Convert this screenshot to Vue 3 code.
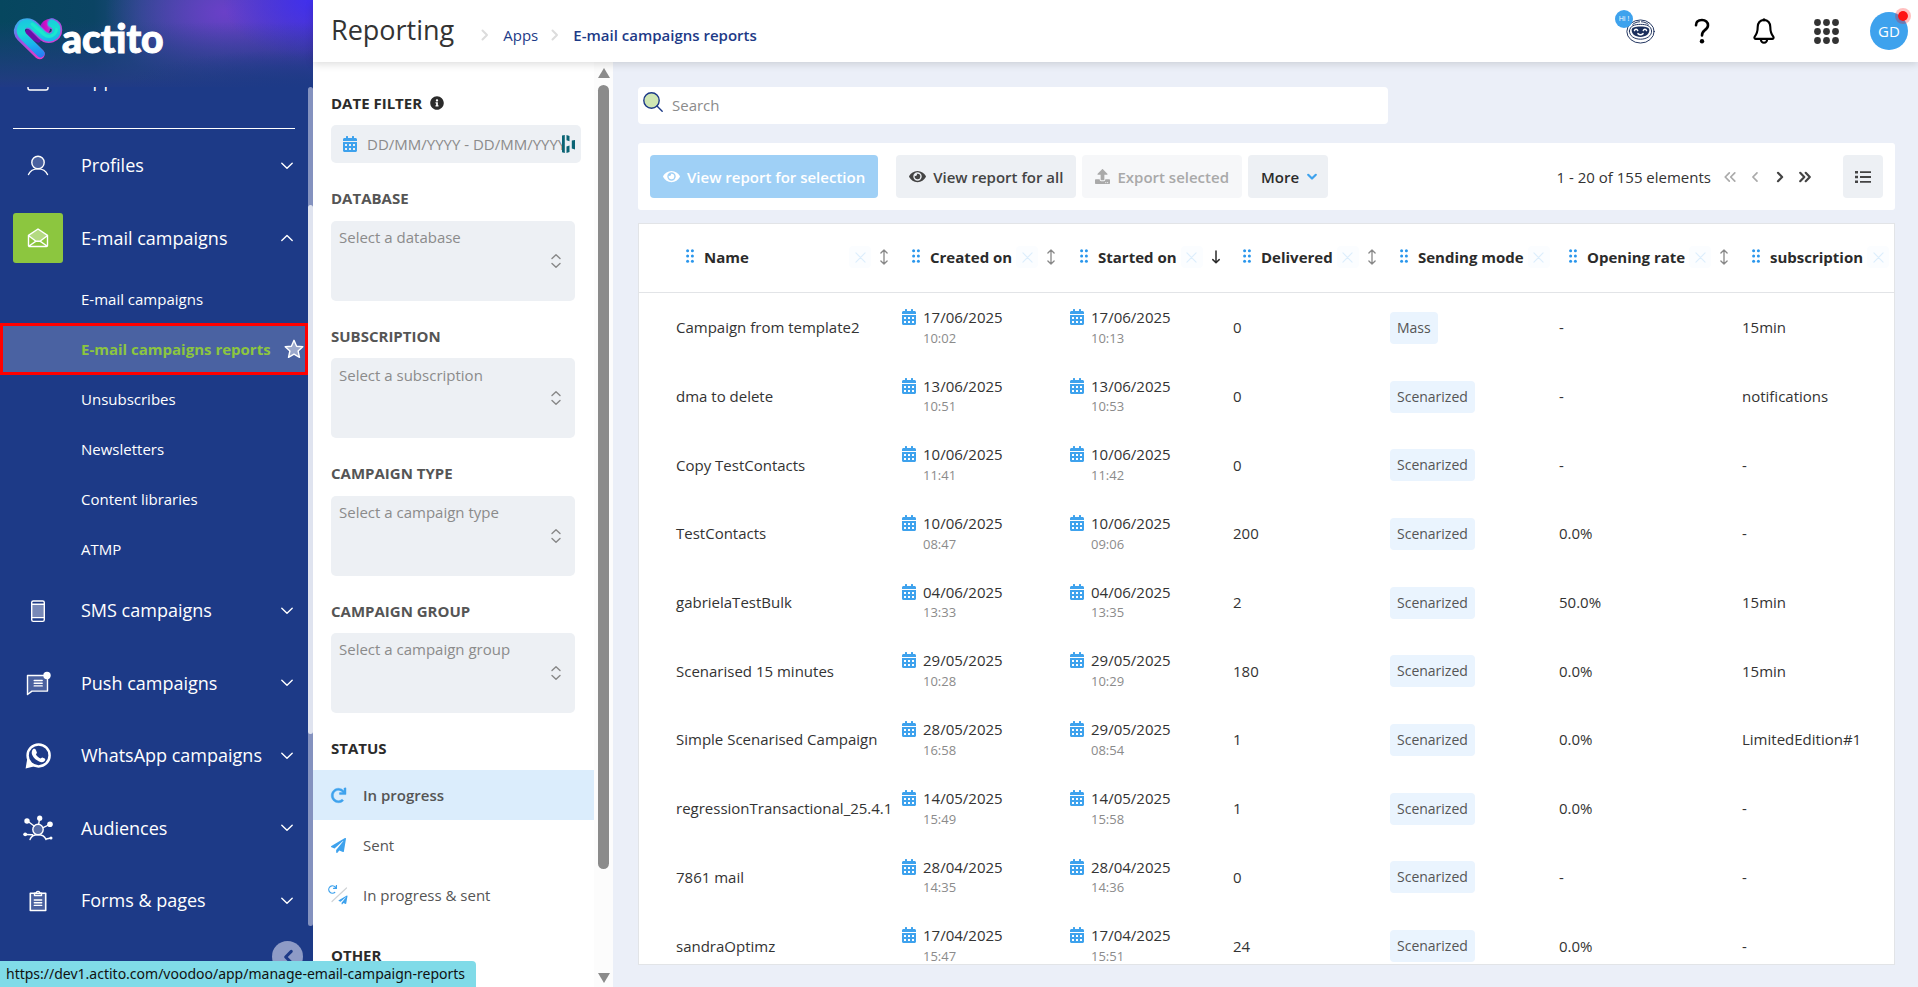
<script setup>
const icons = {
  user: ['0 0 24 24', '<circle cx="12" cy="8.5" r="6.2" fill="currentColor" fill-opacity=".2"/><path d="M2.5 20.5C4 17 7.500 14.900 12 14.900s8 2.100 9.500 5.600"/>'],
  envelope: ['0 0 24 24', '<path d="M2.500 9.500 12 3l9.500 6.500-7.500 6.200h-4z" fill="currentColor" fill-opacity=".35" stroke="none"/><path d="M2.500 9.300 12 3l9.500 6.300v10.200a1 1 0 0 1-1 1h-17a1 1 0 0 1-1-1zM2.700 9.800l7.300 5.400h4l7.300-5.400M3 20l7-4.800M21 20l-7-4.800"/>'],
  phone: ['0 0 24 24', '<rect x="5.700" y="2" width="12.600" height="20.400" rx="1.600"/><path d="M5.700 5.200h12.600M5.700 18.600h12.600"/><path d="M6 5.200h12v13.400H6z" fill="currentColor" fill-opacity=".4" stroke="none"/>'],
  push: ['0 0 26 26', '<path d="M2.500 5.500h20v15.600H7l-4.500 3.400z" fill="currentColor" fill-opacity=".2"/><path d="M9.200 10.500h8M9.200 13.200h8M9.200 15.900h8"/><circle cx="22" cy="5.500" r="3.700" fill="currentColor" stroke="none"/>'],
  whatsapp: ['0 0 26 26', '<circle cx="13.600" cy="12.400" r="11" stroke-width="2.500"/><path d="M2.200 16 .6 25.400l8.200-2z" fill="currentColor" stroke="none"/><path d="M8 6.300c1-.9 2.400-.5 3 .9l.9 2.200c.2.800-.8 1.400-1 1.900 1 2 2.600 3.500 4.600 4.300.6-.4 1.200-1.400 1.900-1.100l2.300 1.100c1 .6.6 2-.3 2.700-2.100 1.600-5.200.8-7.800-1.200-3.100-2.400-5.300-5.600-4.800-8.400.2-1 .6-1.900 1.200-2.400z" fill="currentColor" stroke="none"/>'],
  audience: ['0 0 30 26', '<circle cx="15" cy="14.500" r="5.200" fill="currentColor" fill-opacity=".25"/><path d="M7 24.500c1-3 4-4.800 8-4.800s7 1.800 8 4.800M4.500 6l6.600 5M16.500 4l-.8 5M26.500 9.500l-6.300 3.200M2.500 19.500l7 .3M23 24l5-1"/><g fill="currentColor" stroke="none"><circle cx="4" cy="6" r="2.700"/><circle cx="16.700" cy="3.200" r="2.600"/><circle cx="27" cy="9.200" r="2.800"/><circle cx="2.200" cy="19.300" r="1.900"/><circle cx="28" cy="23" r="1.500"/></g>'],
  forms: ['0 0 24 24', '<path d="M4.300 4.300h15.400v17.200H4.300z" fill="currentColor" fill-opacity=".2" stroke-width="1.600"/><path d="M8.500 6.500V4.300h1.700c0-2.600 3.600-2.600 3.600 0h1.700v2.200zM8.300 11h7.400M8.300 13.700h7.400M8.300 16.400h7.400"/>'],
  apps: ['0 0 24 24', '<rect x="2" y="2" width="20" height="20" rx="2"/>'],
  down: ['0 0 12 8', '<path d="M.8 1.200 6 6.300l5.200-5.100"/>'],
  up: ['0 0 12 8', '<path d="M.8 6.600 6 1.500l5.200 5.100"/>'],
  star: ['0 0 20 20', '<path d="m10 1.300 2.600 5.900 6.200.6-4.700 4.200 1.400 6.300-5.500-3.200-5.500 3.200 1.400-6.300-4.700-4.200 6.200-.6z" fill="currentColor" fill-opacity=".45"/>'],
  crumb: ['0 0 8 12', '<path d="m1.500 1.500 4.500 4.500-4.500 4.500" stroke-width="2"/>'],
  info: ['0 0 512 512', '<path fill="currentColor" stroke="none" d="M256 8C119 8 8 119 8 256s111 248 248 248 248-111 248-248S393 8 256 8zm0 110c23.200 0 42 18.800 42 42s-18.800 42-42 42-42-18.800-42-42 18.800-42 42-42zm56 254c0 6.600-5.400 12-12 12h-88c-6.600 0-12-5.400-12-12v-24c0-6.600 5.400-12 12-12h12v-64h-12c-6.600 0-12-5.400-12-12v-24c0-6.600 5.400-12 12-12h64c6.600 0 12 5.400 12 12v100h12c6.600 0 12 5.400 12 12z"/>'],
  calendar: ['0 0 448 512', '<path fill="currentColor" stroke="none" fill-rule="evenodd" d="M0 464c0 26.500 21.500 48 48 48h352c26.500 0 48-21.500 48-48V192H0zM320 256h64v64h-64zm0 128h64v64h-64zM192 256h64v64h-64zm0 128h64v64h-64zM64 256h64v64H64zm0 128h64v64H64zM400 64h-48V16c0-8.800-7.200-16-16-16h-32c-8.800 0-16 7.200-16 16v48H160V16c0-8.800-7.200-16-16-16h-32c-8.800 0-16 7.200-16 16v48H48C21.500 64 0 85.500 0 112v48h448v-48c0-26.500-21.500-48-48-48z"/>'],
  bars: ['0 0 14 18', '<path fill="#0b6474" stroke="none" d="M1 .5 3.800 0v18L1 17.300zM5.500 0l3 1v5.200l-3-1zM5.500 11.500l3-1V17l-3 1zM10.800 5.500 14 5v9.500l-3.200-1z"/>'],
  updown: ['0 0 10 16', '<path d="M1 5.500 5 1.700l4 3.800M1 10.500l4 3.800 4-3.800" stroke-width="1.400"/>'],
  redo: ['0 0 512 512', '<path fill="currentColor" stroke="currentColor" stroke-width="14" d="M500.300 0h-47.400a12 12 0 0 0-12 12.600l4 82.700A247.400 247.400 0 0 0 256 8C119.300 8 7.900 119.500 8 256.200 8.100 393.100 119.100 504 256 504a247.100 247.100 0 0 0 166.200-63.900 12 12 0 0 0 .5-17.400l-34-34a12 12 0 0 0-16.400-.6A176 176 0 1 1 402.100 157.800l-101.500-4.900a12 12 0 0 0-12.600 12v47.400a12 12 0 0 0 12 12h200.300a12 12 0 0 0 12-12V12a12 12 0 0 0-12-12z"/>'],
  plane: ['0 0 512 512', '<path fill="currentColor" stroke="none" d="M476 3.200 12.500 270.600c-18.100 10.400-15.800 35.600 2.200 43.200L121 358.400l287.300-253.200c5.500-4.900 13.300 2.600 8.600 8.300L176 407v80.500c0 23.600 28.500 32.900 42.500 15.800L282 426l124.600 52.200c14.200 6 30.400-2.900 33-18.200l72-432C515 7.800 493.300-6.800 476 3.200z"/>'],
  both: ['0 0 20 20', '<path d="M4 16.500 18.500 3" stroke="#d0d3d6" stroke-width="1.200"/><g transform="scale(.0176)"><path fill="currentColor" stroke="none" d="M500.300 0h-47.400a12 12 0 0 0-12 12.600l4 82.700A247.400 247.400 0 0 0 256 8C119.300 8 7.900 119.500 8 256.200 8.100 393.100 119.100 504 256 504a247.100 247.100 0 0 0 166.200-63.900 12 12 0 0 0 .5-17.400l-34-34a12 12 0 0 0-16.400-.6A176 176 0 1 1 402.100 157.800l-101.500-4.900a12 12 0 0 0-12.600 12v47.400a12 12 0 0 0 12 12h200.300a12 12 0 0 0 12-12V12a12 12 0 0 0-12-12z"/></g><g transform="translate(10.500 10.500) scale(.0176)"><path fill="currentColor" stroke="none" d="M476 3.200 12.500 270.600c-18.100 10.400-15.800 35.600 2.200 43.200L121 358.400l287.300-253.200c5.500-4.900 13.300 2.600 8.600 8.300L176 407v80.500c0 23.600 28.500 32.900 42.500 15.800L282 426l124.600 52.200c14.200 6 30.400-2.900 33-18.200l72-432C515 7.800 493.300-6.800 476 3.200z"/></g>'],
  eye: ['0 0 576 512', '<path fill="currentColor" stroke="none" d="M572.500 241.400C518.300 135.600 410.900 64 288 64S57.700 135.600 3.500 241.400a32.400 32.400 0 0 0 0 29.200C57.700 376.400 165.100 448 288 448s230.300-71.600 284.500-177.400a32.400 32.400 0 0 0 0-29.200zM288 400a144 144 0 1 1 144-144 143.900 143.900 0 0 1-144 144zm0-240a95.300 95.300 0 0 0-25.300 3.800 47.900 47.900 0 0 1-66.900 66.900A95.800 95.800 0 1 0 288 160z"/>'],
  upload: ['0 0 512 512', '<path fill="currentColor" stroke="none" d="M296 384h-80c-13.300 0-24-10.700-24-24V192h-87.700c-17.800 0-26.700-21.500-14.100-34.100L242.300 5.700c7.500-7.500 19.800-7.500 27.300 0l152.200 152.200c12.600 12.600 3.700 34.100-14.100 34.100H320v168c0 13.300-10.700 24-24 24zm216-8v112c0 13.300-10.700 24-24 24H24c-13.300 0-24-10.700-24-24V376c0-13.300 10.700-24 24-24h136v8c0 30.900 25.100 56 56 56h80c30.900 0 56-25.100 56-56v-8h136c13.300 0 24 10.700 24 24zm-124 88c0-11-9-20-20-20s-20 9-20 20 9 20 20 20 20-9 20-20zm64 0c0-11-9-20-20-20s-20 9-20 20 9 20 20 20 20-9 20-20z"/>'],
  caret: ['0 0 10 8', '<path d="m1.200 1.800 3.800 3.700 3.800-3.700" stroke-width="2.200"/>'],
  first: ['0 0 12 10', '<path d="M5.300.8 1.200 5l4.100 4.200M10.800.8 6.700 5l4.100 4.200" stroke-width="1.700"/>'],
  prev: ['0 0 12 10', '<path d="M8 .8 3.900 5 8 9.200" stroke-width="1.700"/>'],
  next: ['0 0 12 10', '<path d="M4 .8 8.100 5 4 9.200" stroke-width="2.200"/>'],
  last: ['0 0 12 10', '<path d="M1.200.8 5.300 5 1.200 9.200M6.700.8 10.800 5l-4.100 4.200" stroke-width="2.200"/>'],
  list: ['0 0 16 14', '<path d="M5 2.200h11M5 7h11M5 11.800h11" stroke-width="1.800" stroke-linecap="butt"/><path d="M0 1h3v2.600H0zM0 5.700h3v2.600H0zM0 10.500h3v2.600H0z" fill="currentColor" stroke="none"/>'],
  grip: ['0 0 8 14', '<g fill="currentColor" stroke="none"><circle cx="1.600" cy="1.800" r="1.500"/><circle cx="6.400" cy="1.800" r="1.500"/><circle cx="1.600" cy="7" r="1.500"/><circle cx="6.400" cy="7" r="1.500"/><circle cx="1.600" cy="12.200" r="1.500"/><circle cx="6.400" cy="12.200" r="1.500"/></g>'],
  cross: ['0 0 12 12', '<path d="m1 1 10 10M11 1 1 11" stroke-width="1.200"/>'],
  sort: ['0 0 8 16', '<path d="M4 1.200v13.600M.9 4 4 1l3.100 3M.9 12 4 15l3.100-3" stroke-width="1.300"/>'],
  sorted: ['0 0 8 16', '<path d="M4 2v11.600M.8 10.600 4 13.800l3.200-3.200" stroke-width="1.500"/>'],
  search: ['0 0 20 20', '<circle cx="8.500" cy="8.500" r="7.700" fill="#cfe6b4"/><path d="m14 14 5.200 5.200"/>'],
  left: ['0 0 10 12', '<path d="M7.800 1.200 3 6l4.800 4.800" stroke-width="2.600"/>'],
  question: ['0 0 16 26', '<path d="M2 7.200C2 3.800 4.400 2 8 2s6 2 6 5.200c0 2.600-1.500 3.800-3.400 5.200C8.800 13.700 8 14.600 8 17.400" stroke-width="2.600"/><circle cx="8" cy="23.300" r="2.200" fill="currentColor" stroke="none"/>'],
  bell: ['0 0 22 26', '<path d="M11 2c-4 0-6.300 3-6.300 7 0 5.600-1.500 7.800-3 9.600-.8 1 0 2.300 1.200 2.300h16.200c1.200 0 2-1.300 1.200-2.300-1.500-1.800-3-4-3-9.600 0-4-2.300-7-6.300-7zM7.800 21.500c.2 2 1.500 3.200 3.200 3.200s3-1.200 3.200-3.200" stroke-width="2.100"/><circle cx="11" cy="1.800" r="1.600" fill="currentColor" stroke="none"/>'],
  grid: ['0 0 25 25', '<g fill="currentColor" stroke="none"><circle cx="3.500" cy="3.500" r="3.400"/><circle cx="12.500" cy="3.500" r="3.400"/><circle cx="21.500" cy="3.500" r="3.400"/><circle cx="3.500" cy="12.500" r="3.400"/><circle cx="12.500" cy="12.500" r="3.400"/><circle cx="21.500" cy="12.500" r="3.400"/><circle cx="3.500" cy="21.500" r="3.400"/><circle cx="12.500" cy="21.500" r="3.400"/><circle cx="21.500" cy="21.500" r="3.400"/></g>'],
  mascot: ['0 0 30 26', '<ellipse cx="15" cy="13" rx="14.200" ry="12" stroke-width="1"/><path d="M3.500 12.500C4 6.800 9 5.600 15 5.600s11 1.200 11.500 6.900c.2 5-5 8.500-11.500 8.500S3.300 17.500 3.500 12.500z" stroke-width="1"/><path d="M7 5.500c2-1.700 4.500-2.500 7-2.600M23 5.500c-2-1.700-4.500-2.500-7-2.600" stroke-width="1"/><path d="M5.800 11.500c0-2.500 3-3.700 9.200-3.700s9.200 1.200 9.200 3.700c0 4.300-3.500 7.100-9.200 7.100s-9.200-2.800-9.200-7.100z" fill="currentColor" stroke="none"/><path d="M8.700 12c.6-1.700 2.800-1.700 3.400 0M17.900 12c.6-1.700 2.800-1.700 3.400 0M12.300 15.200c1.500 1.300 3.900 1.300 5.400 0" stroke="#fff" stroke-width="1.500"/>'],
}

const subItems = ['E-mail campaigns', 'E-mail campaigns reports', 'Unsubscribes', 'Newsletters', 'Content libraries', 'ATMP']
const navItems = [
  { label: 'Profiles', icon: 'user' },
  { label: 'E-mail campaigns', icon: 'envelope', open: true },
  { label: 'SMS campaigns', icon: 'phone' },
  { label: 'Push campaigns', icon: 'push' },
  { label: 'WhatsApp campaigns', icon: 'whatsapp' },
  { label: 'Audiences', icon: 'audience' },
  { label: 'Forms & pages', icon: 'forms' },
]
const filters = [
  { id: 'database', label: 'DATABASE', hint: 'Select a database' },
  { id: 'subscription', label: 'SUBSCRIPTION', hint: 'Select a subscription' },
  { id: 'type', label: 'CAMPAIGN TYPE', hint: 'Select a campaign type' },
  { id: 'group', label: 'CAMPAIGN GROUP', hint: 'Select a campaign group' },
]
const statuses = [
  { label: 'In progress', icon: 'redo', active: true },
  { label: 'Sent', icon: 'plane' },
  { label: 'In progress & sent', icon: 'both' },
]
const columns = [
  { key: 'name', label: 'Name', sort: 'sort' },
  { key: 'created', label: 'Created on', sort: 'sort' },
  { key: 'started', label: 'Started on', sort: 'sorted' },
  { key: 'delivered', label: 'Delivered', sort: 'sort' },
  { key: 'mode', label: 'Sending mode' },
  { key: 'rate', label: 'Opening rate', sort: 'sort' },
  { key: 'sub', label: 'subscription' },
]
const rows = [
  ['Campaign from template2', '17/06/2025', '10:02', '17/06/2025', '10:13', '0', 'Mass', '-', '15min'],
  ['dma to delete', '13/06/2025', '10:51', '13/06/2025', '10:53', '0', 'Scenarized', '-', 'notifications'],
  ['Copy TestContacts', '10/06/2025', '11:41', '10/06/2025', '11:42', '0', 'Scenarized', '-', '-'],
  ['TestContacts', '10/06/2025', '08:47', '10/06/2025', '09:06', '200', 'Scenarized', '0.0%', '-'],
  ['gabrielaTestBulk', '04/06/2025', '13:33', '04/06/2025', '13:35', '2', 'Scenarized', '50.0%', '15min'],
  ['Scenarised 15 minutes', '29/05/2025', '10:28', '29/05/2025', '10:29', '180', 'Scenarized', '0.0%', '15min'],
  ['Simple Scenarised Campaign', '28/05/2025', '16:58', '29/05/2025', '08:54', '1', 'Scenarized', '0.0%', 'LimitedEdition#1'],
  ['regressionTransactional_25.4.1', '14/05/2025', '15:49', '14/05/2025', '15:58', '1', 'Scenarized', '0.0%', '-'],
  ['7861 mail', '28/04/2025', '14:35', '28/04/2025', '14:36', '0', 'Scenarized', '-', '-'],
  ['sandraOptimz', '17/04/2025', '15:47', '17/04/2025', '15:51', '24', 'Scenarized', '0.0%', '-'],
]
const pages = ['first', 'prev', 'next', 'last']
</script>

<template>
  <div class="app">
    <aside class="sidebar">
      <a class="brand" href="#" aria-label="actito">
        <svg class="heart" viewBox="0 0 48 42" aria-hidden="true">
          <defs>
            <linearGradient id="edge" gradientUnits="userSpaceOnUse" x1="4" y1="2" x2="24" y2="40">
              <stop offset="0" stop-color="#2fb4ea" /><stop offset=".35" stop-color="#8b5be8" /><stop offset="1" stop-color="#e838c8" />
            </linearGradient>
            <linearGradient id="tube" gradientUnits="userSpaceOnUse" x1="26" y1="38" x2="20" y2="2">
              <stop offset="0" stop-color="#2a7cf5" /><stop offset=".35" stop-color="#18b4ee" /><stop offset=".7" stop-color="#18dcd2" /><stop offset="1" stop-color="#1ac8e0" />
            </linearGradient>
            <linearGradient id="tip" gradientUnits="userSpaceOnUse" x1="24" y1="10" x2="42" y2="8">
              <stop offset="0" stop-color="#7a22d0" /><stop offset=".4" stop-color="#d80cc4" /><stop offset="1" stop-color="#22b4e6" />
            </linearGradient>
          </defs>
          <g fill="none" stroke-linecap="round" stroke-linejoin="round">
            <path d="m13 15 10 6" stroke="#6a10a8" stroke-width="7" />
            <path d="M30 11c0-3.500 3-5.500 6.500-5.500" stroke="url(#tip)" stroke-width="10" />
            <path d="M24.500 36 6.500 18.500C1.500 13 5.500 5.500 12 5.500c3 0 5.500 1.500 7.500 3.500l7.500 7.500c6 6 15 3 15-4.500 0-3-2-5.500-5-6.500" stroke="url(#edge)" stroke-width="10.500" />
            <path d="M25.500 35.500 8 18C3.500 13 6.500 5.500 12.500 5.500c3 0 5 1.500 7 3.500l8 7.500c6 5.500 14 2.500 14-4.500 0-3-2-5.500-4.500-6.500" stroke="url(#tube)" stroke-width="8" />
            <path d="m17 6 12 10.500c5 4 12 1 12.500-5" stroke="#1cf2c8" stroke-width="3" stroke-opacity=".7" />
          </g>
        </svg>
        <span>actito</span>
      </a>
      <div class="nav-wrap">
        <nav class="nav">
          <a class="item cut" href="#">
            <span class="tile"><svg class="i24" :viewBox="icons.apps[0]" v-html="icons.apps[1]" /></span>
            <span class="grow">Apps</span>
          </a>
          <hr />
          <template v-for="n in navItems" :key="n.label">
            <a class="item" href="#">
              <span class="tile" :class="{ on: n.open }"><svg :class="n.icon === 'audience' ? 'i30' : n.icon === 'push' || n.icon === 'whatsapp' ? 'i26' : 'i24'" :viewBox="icons[n.icon][0]" v-html="icons[n.icon][1]" /></span>
              <span class="grow">{{ n.label }}</span>
              <svg class="chev" :viewBox="icons.down[0]" v-html="n.open ? icons.up[1] : icons.down[1]" />
            </a>
            <template v-if="n.open">
              <a v-for="s in subItems" :key="s" href="#" class="sub" :class="{ current: s === 'E-mail campaigns reports' }">
                <span>{{ s }}</span>
                <svg v-if="s === 'E-mail campaigns reports'" class="i20" :viewBox="icons.star[0]" v-html="icons.star[1]" />
              </a>
            </template>
          </template>
        </nav>
        <div class="nav-track"><div class="nav-thumb"></div></div>
      </div>
      <div class="side-foot">
        <button class="collapse" aria-label="Collapse menu"><svg class="i14" :viewBox="icons.left[0]" v-html="icons.left[1]" /></button>
      </div>
    </aside>

    <div class="main">
      <header class="top">
        <h1>Reporting</h1>
        <nav class="crumbs">
          <svg :viewBox="icons.crumb[0]" v-html="icons.crumb[1]" />
          <a href="#">Apps</a>
          <svg :viewBox="icons.crumb[0]" v-html="icons.crumb[1]" />
          <a href="#" class="here">E-mail campaigns reports</a>
        </nav>
        <div class="tools">
          <button class="mascot" aria-label="Assistant">
            <svg :viewBox="icons.mascot[0]" v-html="icons.mascot[1]" />
            <span class="hi">Hi !</span>
          </button>
          <button aria-label="Help"><svg class="q" :viewBox="icons.question[0]" v-html="icons.question[1]" /></button>
          <button aria-label="Notifications"><svg class="b" :viewBox="icons.bell[0]" v-html="icons.bell[1]" /></button>
          <button aria-label="Applications"><svg class="g" :viewBox="icons.grid[0]" v-html="icons.grid[1]" /></button>
          <button class="avatar">GD<span class="dot"></span></button>
        </div>
      </header>

      <div class="body">
        <section class="filters">
          <div class="filter-list">
            <label class="flabel dark" for="date">DATE FILTER <svg class="i14" :viewBox="icons.info[0]" v-html="icons.info[1]" /></label>
            <div class="date">
              <svg class="cal" :viewBox="icons.calendar[0]" v-html="icons.calendar[1]" />
              <input id="date" type="text" placeholder="DD/MM/YYYY - DD/MM/YYYY" />
              <svg class="ext" :viewBox="icons.bars[0]" v-html="icons.bars[1]" />
            </div>
            <template v-for="f in filters" :key="f.id">
              <label class="flabel" :for="f.id">{{ f.label }}</label>
              <div class="pick">
                <select :id="f.id"><option>{{ f.hint }}</option></select>
                <svg :viewBox="icons.updown[0]" v-html="icons.updown[1]" />
              </div>
            </template>
            <h2 class="flabel dark">STATUS</h2>
            <button v-for="s in statuses" :key="s.label" class="status" :class="{ active: s.active }">
              <span class="sicon"><svg :class="s.icon === 'both' ? 'i20' : 'i16'" :viewBox="icons[s.icon][0]" v-html="icons[s.icon][1]" /></span>{{ s.label }}
            </button>
            <h2 class="flabel dark other">OTHER</h2>
          </div>
          <div class="track">
            <span class="tri"></span>
            <div class="thumb"></div>
            <span class="tri flip"></span>
          </div>
        </section>

        <main class="content">
          <label class="search">
            <svg class="i20" :viewBox="icons.search[0]" v-html="icons.search[1]" />
            <input type="text" placeholder="Search" aria-label="Search" />
          </label>

          <div class="toolbar">
            <button class="btn primary" disabled><svg class="eye" :viewBox="icons.eye[0]" v-html="icons.eye[1]" />View report for selection</button>
            <button class="btn"><svg class="eye" :viewBox="icons.eye[0]" v-html="icons.eye[1]" />View report for all</button>
            <button class="btn off" disabled><svg class="i16" :viewBox="icons.upload[0]" v-html="icons.upload[1]" />Export selected</button>
            <button class="btn more">More<svg class="car" :viewBox="icons.caret[0]" v-html="icons.caret[1]" /></button>
            <span class="count">1 - 20 of 155 elements</span>
            <div class="pager">
              <button v-for="p in pages" :key="p" :class="{ dim: p === 'first' || p === 'prev' }" :aria-label="p + ' page'"><svg :viewBox="icons[p][0]" v-html="icons[p][1]" /></button>
            </div>
            <button class="btn list" aria-label="Columns"><svg :viewBox="icons.list[0]" v-html="icons.list[1]" /></button>
          </div>

          <div class="sheet">
            <table>
              <colgroup><col v-for="c in columns" :key="c.key" :class="'c-' + c.key" /></colgroup>
              <thead>
                <tr>
                  <th v-for="c in columns" :key="c.key" scope="col">
                    <div class="th">
                      <svg class="grip" :viewBox="icons.grip[0]" v-html="icons.grip[1]" />
                      <span class="tname" :class="{ grow: c.key === 'name' }">{{ c.label }}</span>
                      <button class="x" :aria-label="'Remove ' + c.label"><svg :viewBox="icons.cross[0]" v-html="icons.cross[1]" /></button>
                      <svg v-if="c.sort" class="sort" :class="c.sort" :viewBox="icons.sort[0]" v-html="icons[c.sort][1]" />
                    </div>
                  </th>
                </tr>
              </thead>
              <tbody>
                <tr v-for="r in rows" :key="r[0]">
                  <td>{{ r[0] }}</td>
                  <td v-for="k in [1, 3]" :key="k">
                    <div class="when">
                      <svg class="cal" :viewBox="icons.calendar[0]" v-html="icons.calendar[1]" />
                      <div><div class="day">{{ r[k] }}</div><div class="time">{{ r[k + 1] }}</div></div>
                    </div>
                  </td>
                  <td>{{ r[5] }}</td>
                  <td><span class="badge">{{ r[6] }}</span></td>
                  <td>{{ r[7] }}</td>
                  <td>{{ r[8] }}</td>
                </tr>
              </tbody>
            </table>
          </div>
        </main>
      </div>
    </div>
    <div class="statusbar">https://dev1.actito.com/voodoo/app/manage-email-campaign-reports</div>
  </div>
</template>

<style>
body { margin: 0; }
</style>

<style scoped>
* { box-sizing: border-box; }
.app { display: flex; height: 100vh; overflow: hidden; font-family: "Open Sans", "Noto Sans", sans-serif; font-size: 15px; color: #333; background: #ebeff8; }
a { color: inherit; text-decoration: none; }
button { font: inherit; color: inherit; border: 0; background: none; padding: 0; display: flex; align-items: center; justify-content: center; }
input, select { font: inherit; border: 0; outline: 0; background: none; }
svg { fill: none; stroke: currentColor; stroke-width: 1.4; stroke-linecap: round; stroke-linejoin: round; flex: none; display: block; overflow: visible; }
.i14 { width: 14px; height: 14px; }
.i16 { width: 15px; height: 15px; }
.i20 { width: 20px; height: 20px; }
.i24 { width: 24px; height: 24px; }
.i26 { width: 26px; height: 26px; }
.i30 { width: 30px; height: 26px; }
.grow { flex: 1; }

.sidebar { width: 313px; flex: none; display: flex; flex-direction: column; background: #1d3a87; color: #fff; }
.brand {
  height: 87px; flex: none; display: flex; align-items: flex-start; padding: 18px 0 0 15px;
  background:
    radial-gradient(170px 40px at 290px 90px, #1d3a87, rgba(29, 58, 135, 0)),
    linear-gradient(to bottom, rgba(34, 62, 130, 0) 25%, rgba(34, 60, 130, .9) 90%, #203a86 100%),
    radial-gradient(90px 60px at 100% 0, #4030ee, rgba(64, 48, 238, 0)),
    radial-gradient(120px 80px at 225px 12px, #6a40c8, rgba(106, 64, 200, 0)),
    linear-gradient(to right, #06475f 0, #0b4464 30%, #1f4a80 45%, #3a48a0 70%, #4a34c0 100%);
}
.heart { width: 48px; height: 42px; }
.brand span { font: 900 39px/40px Lato, sans-serif; -webkit-text-stroke: 1px #fff; margin-left: -1px; }
.nav-wrap { flex: 1; min-height: 0; display: flex; }
.nav { width: 308px; overflow: hidden; }
.item { display: flex; align-items: center; padding: 24px 15px 24px 13px; font-size: 18px; line-height: 1.36; }
.item.cut { margin-top: -43px; }
.tile { width: 50px; height: 50px; margin: -13px 18px -13px 0; border-radius: 3px; display: flex; align-items: center; justify-content: center; }
.tile.on { background: #8cc63f; }
.chev { width: 12px; height: 8px; }
hr { border: 0; height: 1px; background: #fff; margin: 12px 13px 0; }
.sub { display: flex; align-items: center; justify-content: space-between; height: 50px; padding: 0 4px 0 81px; }
.sub.current { height: 52px; margin: -1px 0; border: 3px solid #f00; background: #4a62a2; color: #8cc63f; font-weight: 700; padding: 0 1px 0 78px; }
.sub svg { color: #fff; }
.nav-track { width: 5px; background: #8492bf; border-radius: 3px; padding-top: 118px; }
.nav-thumb { height: 529px; background: #dfe3ef; border-radius: 3px; }
.side-foot { height: 61px; flex: none; display: flex; justify-content: flex-end; align-items: flex-start; padding: 15px 10px 0; }
.collapse { width: 31px; height: 31px; flex: none; border-radius: 50%; background: #8e9bc6; color: #1d3a87; }

.main { flex: 1; min-width: 0; display: flex; flex-direction: column; }
.top { height: 62px; flex: none; display: flex; align-items: center; padding: 0 10px 0 18px; background: #fff; box-shadow: 0 2px 8px rgba(0, 0, 0, .14); position: relative; z-index: 1; }
h1 { margin: 0; font-size: 27px; font-weight: 500; line-height: 60px; padding-bottom: 2px; color: #333; }
.crumbs { display: flex; align-items: center; padding: 8px 0 0 27px; color: #1d3a87; }
.crumbs svg { width: 8px; height: 12px; color: #dcdcdc; margin-right: 14px; }
.crumbs a { margin-right: 13px; }
.here { font-weight: 600; }
.tools { margin-left: auto; display: flex; align-items: center; }
.tools svg.q { width: 16px; height: 26px; }
.tools svg.b { width: 22px; height: 26px; }
.tools svg.g { width: 25px; height: 25px; color: #333; }
.tools button { width: 62px; height: 38px; color: #000; }
.tools button.mascot { position: relative; width: 62px; color: #1b2f5c; }
.mascot svg { width: 29px; height: 25px; }
.hi { position: absolute; left: 6px; top: -2px; width: 18px; height: 18px; border-radius: 50%; background: #3ea2ed; color: #fff; font-size: 7px; line-height: 18px; }
.tools button.avatar { position: relative; width: 38px; margin-left: 13px; border-radius: 50%; background: #3ea2ed; color: #fff; }
.dot { position: absolute; right: -3px; top: -4px; width: 16px; height: 16px; border-radius: 50%; border: 3px solid rgba(255, 0, 0, .25); background: #f11 padding-box; }

.body { flex: 1; min-height: 0; display: flex; }
.filters { width: 300px; flex: none; display: flex; background: #fff; overflow: hidden; }
.filter-list { flex: 1; padding-top: 31px; overflow: hidden; }
.flabel { display: flex; align-items: center; gap: 8px; margin: 0 0 12px 18px; font-size: 15px; line-height: 1.36; font-weight: 700; color: #555; }
.dark { color: #2b2b2b; }
.date { display: flex; align-items: center; height: 38px; margin: 0 13px 25px 18px; padding: 0 18px 0 12px; border-radius: 5px; background: #edf0f4; position: relative; }
.cal { width: 14px; height: 16px; color: #3ea2ed; }
.date input { width: 100%; min-width: 0; padding: 0 0 0 10px; }
input::placeholder { color: #8b8b8b; opacity: 1; }
.ext { position: absolute; right: 6px; top: 10px; width: 14px; height: 18px; }
.pick { position: relative; height: 80px; margin: 0 19px 25px 18px; border-radius: 5px; background: #edf0f4; }
.pick select { appearance: none; width: 100%; height: 80px; padding: 0 8px 47px; color: #8b8b8b; }
.pick svg { position: absolute; right: 14px; top: 32px; width: 10px; height: 16px; color: #888; }
.status { width: 100%; height: 50px; justify-content: flex-start; color: #555; }
.sicon { width: 22px; margin: 0 14px; display: flex; justify-content: center; color: #3ea2ed; }
.status.active { background: #dbedfc; font-weight: 600; }
.other { margin-top: 25px; }
.track { width: 19px; background: #fcfcfc; display: flex; flex-direction: column; align-items: center; padding: 6px 0 4px; }
.tri { border: 6px solid transparent; border-top-width: 0; border-bottom: 10px solid #8b8b8b; }
.thumb { width: 11px; height: 784px; margin: 7px 0 auto; border-radius: 6px; background: #8b8b8b; }
.flip { transform: rotate(180deg); }

.content { flex: 1; min-width: 0; display: flex; flex-direction: column; padding: 25px 23px 22px 25px; }
.search { width: 750px; height: 37px; flex: none; display: flex; align-items: flex-start; gap: 9px; padding: 5px 6px 0 5px; border-radius: 4px; background: #fff; color: #1d3a87; }
.search input { flex: 1; height: 26px; padding: 0; }
.toolbar { display: flex; align-items: center; flex: none; height: 67px; margin: 19px 0 13px; padding: 0 12px; border-radius: 3px; background: #fff; }
.btn { height: 43px; padding: 0 13px; margin-right: 6px; gap: 7px; border-radius: 4px; background: #edf0f4; font-weight: 600; color: #444; white-space: nowrap; }
.btn.primary { margin-right: 18px; background: #9fd0f6; color: #fff; }
.btn.off { background: #f6f7f9; color: #a9a9a9; }
.btn.more { color: #2b2b2b; gap: 8px; padding-right: 11px; }
.eye { width: 17px; height: 15px; }
.car { width: 10px; height: 8px; color: #3ea2ed; }
.count { margin-left: auto; }
.pager { display: flex; margin: 0 26px 0 6px; color: #444; }
.pager button { width: 25px; height: 24px; }
.pager svg { width: 12px; height: 10px; }
.pager .dim { color: #aaa; }
.btn.list { width: 40px; padding: 0; margin: 0; }
.list svg { width: 16px; height: 14px; }

.sheet { flex: 1; min-height: 0; overflow: hidden; background: #fff; border: 1px solid #e2e4e7; }
table { width: 100%; table-layout: fixed; border-collapse: separate; border-spacing: 0; }
.c-created { width: 168px; }
.c-started { width: 163px; }
.c-delivered { width: 157px; }
.c-mode { width: 169px; }
.c-rate { width: 183px; }
.c-sub { width: 160px; }
th { height: 69px; padding: 0 6px 2px 18px; border-bottom: 1px solid #e2e4e7; text-align: left; font-weight: 700; color: #2b2b2b; white-space: nowrap; }
th:first-child { padding-left: 47px; }
.th { display: flex; align-items: center; }
.grip { width: 8px; height: 14px; color: #2a96ec; margin: 0 10px 2px 0; }
.x { width: 22px; height: 22px; flex: none; margin-left: 4px; border-radius: 4px; background: #fbfdff; color: #dceefc; }
.x svg { width: 11px; height: 11px; }
.sort { width: 8px; height: 16px; margin-left: 9px; color: #888; }
.sort.sorted { color: #2b2b2b; }
td { padding: 14px 0 14px 8px; line-height: 20px; vertical-align: middle; white-space: nowrap; }
td:first-child { padding-left: 37px; }
.when { display: flex; align-items: flex-start; gap: 7px; }
.when .cal { margin-top: 2px; }
.day { line-height: 1.38; }
.time { font-size: 13px; line-height: 20px; color: #8b8b8b; }
.badge { display: inline-block; padding: 0 7px; line-height: 32px; margin: -6px 0; border-radius: 4px; background: #eaf4fe; color: #555; font-size: 14px; }
.statusbar { position: fixed; left: 0; bottom: 0; z-index: 2; height: 26px; padding: 0 11px 0 6px; border-radius: 0 4px 0 0; background: #80dbe8; color: #111; font-family: "Noto Sans", "Open Sans", sans-serif; line-height: 26px; font-size: 14px; }
</style>
